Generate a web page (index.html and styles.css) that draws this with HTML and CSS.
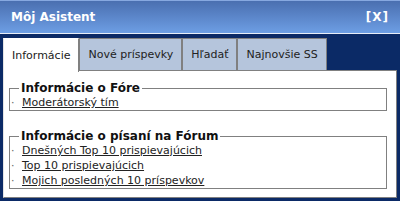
FILE: index.html
```html
<!DOCTYPE html>
<html>
<head>
    <meta charset="utf-8">
    <title>Môj Asistent</title>
    <link rel="stylesheet" href="styles.css">
</head>
<body>

<div class="win">
	<div class="bar">
		<h2>Môj Asistent</h2>
		<a href="javascript:;" class="close">[X]</a>
	</div>
	<div class="body">
		<ul class="tabs">
			<li class="active"><a href="javascript:;">Informácie</a></li>
			<li><a href="javascript:;">Nové príspevky</a></li>
			<li><a href="javascript:;">Hľadať</a></li>
			<li><a href="javascript:;">Najnovšie SS</a></li>
		</ul>
		<div class="panel">
			<fieldset>
				<legend>Informácie o Fóre</legend>
				<ul class="links">
					<li><span class="dot">·</span><a href="#">Moderátorský tím</a></li>
				</ul>
			</fieldset>
			<fieldset>
				<legend>Informácie o písaní na Fórum</legend>
				<ul class="links">
					<li><span class="dot">·</span><a href="#">Dnešných Top 10 prispievajúcich</a></li>
					<li><span class="dot">·</span><a href="#">Top 10 prispievajúcich</a></li>
					<li><span class="dot">·</span><a href="#">Mojich posledných 10 príspevkov</a></li>
				</ul>
			</fieldset>
		</div>
	</div>
</div>

</body>
</html>
```

FILE: styles.css
```css
*{ margin:0; padding:0;}
li{ list-style: none;}
body{ font-family: "DejaVu Sans", Verdana, sans-serif; font-size: 11px; color:#222;}

.win{ width:400px; height:201px; background:#0b2a66; overflow: hidden;}

/* title bar */
.bar{ display: flex; align-items: center; justify-content: space-between; height:32px; padding:0 11px; border-top:1px solid #86a8e0; border-bottom:1px solid #e8eef8; background: linear-gradient(#4a6fb0, #6d9ee4);}
.bar h2{ font-size: 12px; font-weight: bold; color:#fff;}
.bar .close{ font-size: 12px; font-weight: bold; color:#fff; text-decoration: none; letter-spacing: 1px;}

/* body */
.body{ padding:4px 3px 3px;}
.tabs{ display: flex; height:32px;}
.tabs li{ display: flex; align-items: center; padding:0 8px; border:1px solid #808080; border-bottom: none; background:#b5c5dc;}
.tabs li a{ color:#222; text-decoration: none;}
.tabs li.active{ position: relative; z-index: 1; height:33px; border-color:#fff #808080 #fff #e4e4e4; background:#fff;}

.panel{ height:126px; padding:0 9px 0 5px; border:1px solid #808080; border-left-color:#e4e4e4; background:#fff;}

fieldset{ margin-top:10px; padding:0 0 0 1px; border:1px solid #808080;}
fieldset + fieldset{ margin-top:18px;}
legend{ margin-left:8px; padding:0 2px; font-size: 12px; line-height: 14px; font-weight: bold; color:#111;}
.links li{ line-height: 15px;}
.links .dot{ display: inline-block; width:11px; color:#666;}
.links a{ color:#222; text-decoration: underline;}
```
